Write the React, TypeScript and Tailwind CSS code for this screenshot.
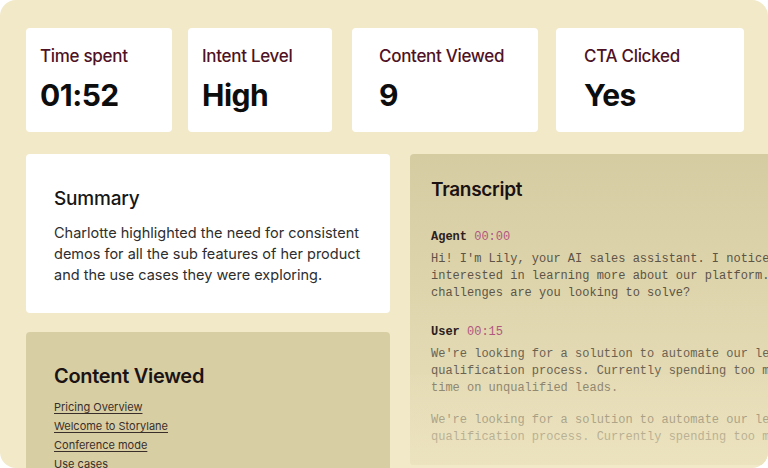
import React from 'react';

const stats = [
  { label: 'Time spent', value: '01:52', w: 'w-[146px]', pl: 'pl-[14px]' },
  { label: 'Intent Level', value: 'High', w: 'w-[144px]', pl: 'pl-[14px]' },
  { label: 'Content Viewed', value: '9', w: 'w-[186px]', pl: 'pl-[27px]' },
  { label: 'CTA Clicked', value: 'Yes', w: 'w-[188px]', pl: 'pl-[28px]' },
];

const links = ['Pricing Overview', 'Welcome to Storylane', 'Conference mode'];

export default function App() {
  return (
    <div className="w-[768px] h-[468px] bg-white font-['Inter',sans-serif]">
      <div className="w-full h-full rounded-2xl bg-[#f2e9c9] overflow-hidden pt-7 pl-[26px]">
        {/* Stats */}
        <div className="flex">
          {stats.map((s, i) => (
            <div
              key={s.label}
              className={`${s.w} ${s.pl} h-[104px] bg-white rounded-[4px] pt-[17px] shrink-0 ${i === 0 ? '' : i === 1 ? 'ml-4' : i === 2 ? 'ml-5' : 'ml-[18px]'}`}
            >
              <p className="text-[17px] leading-[22px] font-medium text-[#4f1225] tracking-[-0.3px]">{s.label}</p>
              <p className="mt-[11px] text-[30px] leading-[34px] font-bold text-[#0d0d0d] tracking-[-0.5px]">{s.value}</p>
            </div>
          ))}
        </div>

        <div className="flex gap-5 mt-[22px]">
          {/* Left column */}
          <div className="w-[364px] shrink-0 flex flex-col gap-[19px]">
            <div className="h-[159px] bg-white rounded-[4px] pl-7 pt-[33px] pr-4">
              <h2 className="text-[19px] leading-[24px] font-medium text-[#161616] tracking-[-0.2px]">Summary</h2>
              <p className="mt-[11px] text-[14.5px] leading-[21px] text-[#2e2e2e]">
                Charlotte highlighted the need for consistent demos for all the sub features of her product and the use cases they were exploring.
              </p>
            </div>
            <div className="h-[160px] bg-[#d8cea4] rounded-[4px] pl-7 pt-[32px]">
              <h2 className="text-[20px] leading-[24px] font-semibold text-[#1c1414] tracking-[-0.3px]">Content Viewed</h2>
              <div className="mt-[11px] flex flex-col gap-[3px] items-start">
                {links.map((l) => (
                  <span key={l} className="text-[11px] leading-[16px] text-[#3a2e2a] underline underline-offset-2 decoration-[#3a2e2a]">{l}</span>
                ))}
                <span className="text-[11px] leading-[16px] text-[#3a2e2a]">Use cases</span>
              </div>
            </div>
          </div>

          {/* Transcript */}
          <div className="relative w-[400px] shrink-0 h-[311px] rounded-[4px] bg-gradient-to-b from-[#d6cca2] to-[#e9e0bb] pl-[21px] pt-[24px] overflow-hidden">
            <h2 className="text-[19px] leading-[24px] font-semibold text-[#1a1212] tracking-[-0.3px]">Transcript</h2>
            <div className="mt-[26px] font-['Liberation_Mono',monospace] text-[12px] whitespace-nowrap">
              <p className="leading-[18px]">
                <span className="font-bold text-[#2a2020]">Agent</span>{' '}
                <span className="text-[#b0577f]">00:00</span>
              </p>
              <p className="mt-[5px] leading-[17px] text-[#5c5446]">
                Hi! I'm Lily, your AI sales assistant. I noticed you're
                <br />
                interested in learning more about our platform. What
                <br />
                challenges are you looking to solve?
              </p>
              <p className="mt-[21px] leading-[18px]">
                <span className="font-bold text-[#2a2020]">User</span>{' '}
                <span className="text-[#b0577f]">00:15</span>
              </p>
              <p className="mt-[5px] leading-[17px] text-[#6b6352]">
                We're looking for a solution to automate our lead
                <br />
                qualification process. Currently spending too much
                <br />
                time on unqualified leads.
              </p>
              <p className="mt-[15px] leading-[17px] text-[#6b6352]">
                We're looking for a solution to automate our lead
                <br />
                qualification process. Currently spending too much
              </p>
            </div>
            <div className="absolute inset-x-0 bottom-0 h-[90px] bg-gradient-to-b from-[#e9e0bb]/20 to-[#ece3bf]/80" />
          </div>
        </div>
      </div>
    </div>
  );
}
